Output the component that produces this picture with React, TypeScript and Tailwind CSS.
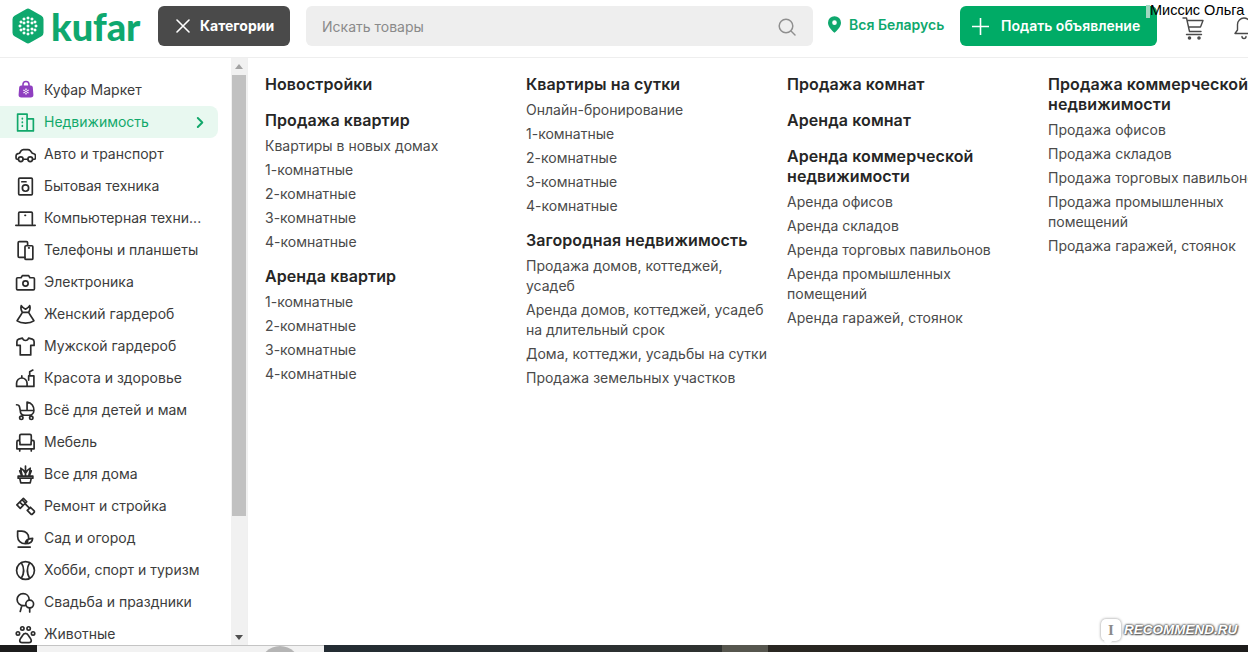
import type { ReactNode } from "react";

const S = ({ children, className = "text-[#2b2b2b]" }: { children: ReactNode; className?: string }) => (
  <svg viewBox="0 0 20 20" className={`h-[21px] w-[21px] shrink-0 ${className}`} fill="none" stroke="currentColor" strokeWidth={1.6} strokeLinecap="round" strokeLinejoin="round">
    {children}
  </svg>
);

const categories: { label: string; icon: ReactNode; active?: boolean }[] = [
  {
    label: "Куфар Маркет",
    icon: (
      <svg viewBox="0 0 20 20" className="h-5 w-5 shrink-0">
        <path d="M7 6V4.5a3 3 0 0 1 6 0V6" fill="none" stroke="#8f3fc0" strokeWidth={1.6} />
        <path d="M5.2 5.5h9.6a2 2 0 0 1 2 1.8l.6 7.5a2.6 2.6 0 0 1-2.6 2.7H5.2a2.6 2.6 0 0 1-2.6-2.7l.6-7.5a2 2 0 0 1 2-1.8z" fill="#8f3fc0" />
        <path d="M10 8.5v6M7.4 10l5.2 3M12.6 10l-5.2 3" stroke="#fff" strokeWidth={1.3} strokeDasharray="1.5 .7" />
      </svg>
    ),
  },
  {
    label: "Недвижимость",
    active: true,
    icon: (
      <S className="text-[#12a86b]">
        <path d="M2.5 2h9v16h-9zM11.5 6.5h6V18h-6M7 6v.5M7 9.5v.5M7 13v.5" />
      </S>
    ),
  },
  {
    label: "Авто и транспорт",
    icon: (
      <S>
        <path d="M3.2 14.500H2c-.6 0-1-.5-1-1.200v-2c0-1.100.7-1.800 1.800-2.100l1.500-.4 1.500-2.300c.6-.8 1.200-1.200 2.200-1.200h4.300c1 0 1.700.4 2.300 1.100l1.900 2.400 1.500.5c1 .3 1.500 1 1.500 2v2c0 .7-.4 1.200-1 1.200h-1M7.800 14.500h4.400" />
        <circle cx="5.5" cy="14.5" r="2.2" />
        <circle cx="14.5" cy="14.5" r="2.2" />
      </S>
    ),
  },
  {
    label: "Бытовая техника",
    icon: (
      <S>
        <rect x="3.5" y="2" width="13" height="16" rx="1" />
        <circle cx="10" cy="11.5" r="3" />
        <path d="M6.5 5.5h4" />
      </S>
    ),
  },
  {
    label: "Компьютерная техни...",
    icon: (
      <S>
        <path d="M3.5 15V5c0-.6.4-1 1-1h11c.6 0 1 .4 1 1v10M.8 16.5h18.4M9.5 7h.5" />
      </S>
    ),
  },
  {
    label: "Телефоны и планшеты",
    icon: (
      <S>
        <path d="M9.5 16.5H4c-.6 0-1-.4-1-1v-13c0-.6.4-1 1-1h7c.6 0 1 .4 1 1V5" />
        <rect x="9.5" y="5.5" width="7.5" height="13" rx="1" />
        <path d="M13 7.5h.5" />
      </S>
    ),
  },
  {
    label: "Электроника",
    icon: (
      <S>
        <path d="M2.500 5.500h3.300L7 3.500h6l1.200 2h3.300c.6 0 1 .4 1 1V16c0 .6-.4 1-1 1h-15c-.6 0-1-.4-1-1V6.500c0-.6.400-1 1-1z" />
        <circle cx="10" cy="11" r="2.5" />
      </S>
    ),
  },
  {
    label: "Женский гардероб",
    icon: (
      <S>
        <path d="M6 1.500c-.8 2-.5 3.800 1 6.500-1.500 3-3.500 5.500-5 8 2 1.500 4.500 2.200 8 2.200s6-.7 8-2.200c-1.500-2.500-3.500-5-5-8 1.500-2.700 1.800-4.500 1-6.500-.8 1.300-2.300 2.500-4 3.500-1.700-1-3.200-2.200-4-3.500zM7 8h6" />
      </S>
    ),
  },
  {
    label: "Мужской гардероб",
    icon: (
      <S>
        <path d="M7 2 3.500 3C2.300 3.400 1.800 4.300 1.800 5.500V9H5v9h10V9h3.200V5.500c0-1.200-.5-2.100-1.700-2.500L13 2c-.5 1.500-1.500 2.300-3 2.300S7.500 3.500 7 2z" />
      </S>
    ),
  },
  {
    label: "Красота и здоровье",
    icon: (
      <S>
        <path d="M1.500 17.500v-3a5 5 0 0 1 10 0v3zM6.500 9.500V7.500M11 17.500h7V7.500h-5v4M14 7.500V3.500l3-1.500" />
      </S>
    ),
  },
  {
    label: "Всё для детей и мам",
    icon: (
      <S>
        <path d="M1.500 4.500c1.700 0 2.500.7 2.800 2L5 10h13c.3-4-2.200-7.500-6.500-8v8M5 10c0 2.700 1.800 4.500 4.500 4.500h3.500c2.800 0 5-2 5-4.500M7 14.500l-.5 1M15 14.500l.5 1" />
        <circle cx="6" cy="17" r="1.6" />
        <circle cx="15.5" cy="17" r="1.6" />
      </S>
    ),
  },
  {
    label: "Мебель",
    icon: (
      <S>
        <path d="M4.500 8V3.500c0-.8.500-1.300 1.300-1.300h8.400c.8 0 1.300.5 1.300 1.300V8M1.800 9.500c0-.8.600-1.500 1.400-1.500s1.500.7 1.500 1.500V12h10.600V9.500c0-.8.700-1.500 1.500-1.500s1.400.7 1.400 1.500V16H1.800zM4.500 16v2M15.500 16v2" />
      </S>
    ),
  },
  {
    label: "Все для дома",
    icon: (
      <S>
        <path d="M3 11.500h14v2H3zM4.500 13.500l1 4.500h9l1-4.500M10 11.500V2M7 11.500c-.5-2-1.500-5-1.500-7.500 2 1 3.500 3 4.500 5 1-2 2.500-4 4.500-5 0 2.500-1 5.500-1.500 7.500M4.500 6.500l2 5M15.500 6.500l-2 5" />
      </S>
    ),
  },
  {
    label: "Ремонт и стройка",
    icon: (
      <S>
        <path d="M1.800 8.500 8 2.300l3.200 3.200L5 11.700zM4.500 5.800l3.200 3.200M6.700 3.600l3.200 3.200M9.500 7.300l4.500 4.500M13.200 12.200l1.500-1.500 3.500 3.500c.4.400.4 1 0 1.400l-1.600 1.600c-.4.400-1 .4-1.400 0l-3.500-3.500z" />
      </S>
    ),
  },
  {
    label: "Сад и огород",
    icon: (
      <S>
        <path d="M3 18.200h11.500M9.800 15C5.500 15 2.500 12 2.500 8.200V3h4c4 0 6.500 3 6.500 6.200 0 2.300-1.200 4.200-3.200 5.800zM9.800 15c0-2.800 2.500-5 7-5.200 0 3.200-2.500 5.200-7 5.200z" />
      </S>
    ),
  },
  {
    label: "Хобби, спорт и туризм",
    icon: (
      <S>
        <circle cx="10" cy="10" r="8.5" />
        <path d="M6 2.500c2.700 4.500 2.700 10.500 0 15M14 2.500c-2.700 4.500-2.700 10.500 0 15" />
      </S>
    ),
  },
  {
    label: "Свадьба и праздники",
    icon: (
      <S>
        <path d="M10 12.700c-.6.200-1.200.3-1.800.3C4.800 13 2 10.500 2 7.200 2 4 4.500 1.500 7.700 1.500c3.300 0 5.800 2.300 5.800 5.800M6.500 13l-1.500 5.500" />
        <circle cx="14" cy="11.5" r="3.7" />
        <path d="M14 15.200V19" />
      </S>
    ),
  },
  {
    label: "Животные",
    icon: (
      <S>
        <circle cx="2.8" cy="9" r="1.6" />
        <circle cx="7" cy="4.2" r="1.6" />
        <circle cx="13" cy="4.2" r="1.6" />
        <circle cx="17.2" cy="9" r="1.6" />
        <path d="M10 9c-1.600 0-2.500 1.300-3.200 2.600S4.500 14 4.500 15.700c0 1.200 1 2 2.200 2h6.600c1.200 0 2.200-.8 2.200-2 0-1.700-1.600-2.800-2.300-4.100S11.600 9 10 9z" />
      </S>
    ),
  },
];

type Section = { title: string; links?: string[] };

const columns: Section[][] = [
  [
    { title: "Новостройки" },
    { title: "Продажа квартир", links: ["Квартиры в новых домах", "1-комнатные", "2-комнатные", "3-комнатные", "4-комнатные"] },
    { title: "Аренда квартир", links: ["1-комнатные", "2-комнатные", "3-комнатные", "4-комнатные"] },
  ],
  [
    { title: "Квартиры на сутки", links: ["Онлайн-бронирование", "1-комнатные", "2-комнатные", "3-комнатные", "4-комнатные"] },
    {
      title: "Загородная недвижимость",
      links: [
        "Продажа домов, коттеджей, усадеб",
        "Аренда домов, коттеджей, усадеб на длительный срок",
        "Дома, коттеджи, усадьбы на сутки",
        "Продажа земельных участков",
      ],
    },
  ],
  [
    { title: "Продажа комнат" },
    { title: "Аренда комнат" },
    {
      title: "Аренда коммерческой недвижимости",
      links: ["Аренда офисов", "Аренда складов", "Аренда торговых павильонов", "Аренда промышленных помещений", "Аренда гаражей, стоянок"],
    },
  ],
  [
    {
      title: "Продажа коммерческой недвижимости",
      links: ["Продажа офисов", "Продажа складов", "Продажа торговых павильонов", "Продажа промышленных помещений", "Продажа гаражей, стоянок"],
    },
  ],
];

// white knit pattern inside the hexagon
const logoDots = [
  [16, 10], [16, 14], [16, 18], [16, 22], [16, 26],
  [12, 11], [20, 11], [12, 25], [20, 25],
  [12, 15], [20, 15], [12, 21], [20, 21],
  [8, 18], [24, 18], [9, 14], [23, 14], [9, 22], [23, 22],
];

function Header() {
  return (
    <header className="relative flex h-[58px] shrink-0 items-start border-b border-[#eeeeee] bg-white pl-3 pt-1.5">
      <div className="flex h-10 w-[146px] shrink-0 items-center gap-[7px]">
        <svg viewBox="0 0 32 36" className="h-[36px] w-[32px] shrink-0">
          <path d="M14 1.2a4 4 0 0 1 4 0l11.5 6.600a4 4 0 0 1 2 3.500v13.400a4 4 0 0 1-2 3.500L18 34.800a4 4 0 0 1-4 0L2.500 28.200a4 4 0 0 1-2-3.500V11.300a4 4 0 0 1 2-3.500z" fill="#0fa86e" />
          {logoDots.map(([x, y]) => (
            <rect key={`${x}-${y}`} x={x - 1.3} y={y - 1.3} width={2.6} height={2.6} fill="#fff" transform={`rotate(45 ${x} ${y})`} />
          ))}
        </svg>
        <span className="font-['Lato',sans-serif] text-[38px] font-black leading-none tracking-[-0.1px] text-[#0fa86e]">kufar</span>
      </div>
      <button className="flex h-10 w-[132px] shrink-0 items-center rounded-md bg-[#4a4a4a] pl-[18px] text-sm font-bold text-white">
        <svg viewBox="0 0 14 14" className="mr-[10px] h-[14px] w-[14px]" stroke="currentColor" strokeWidth={1.6} strokeLinecap="round">
          <path d="M1 1l12 12M13 1 1 13" />
        </svg>
        Категории
      </button>
      <div className="ml-4 flex h-10 w-[507px] shrink-0 items-center justify-between rounded-md bg-[#eeeeee] pl-4 pr-4 pt-px text-sm text-[#8a8a8a]">
        Искать товары
        <svg viewBox="0 0 20 20" className="h-5 w-5" fill="none" stroke="#8f8f8f" strokeWidth={1.5} strokeLinecap="round">
          <circle cx="9" cy="9" r="6.8" />
          <path d="m14 14 4 4" />
        </svg>
      </div>
      <div className="ml-[15px] flex h-10 w-[132px] shrink-0 items-center gap-2 pb-[3px] text-sm font-semibold text-[#0fa86e]">
        <svg viewBox="0 0 14 18" className="h-[17px] w-[13px] shrink-0">
          <path fillRule="evenodd" d="M7 0a7 7 0 0 1 7 7c0 4.500-4.500 8.500-7 11C4.500 15.500 0 11.500 0 7a7 7 0 0 1 7-7zm0 4.500a2.500 2.500 0 1 0 0 5 2.500 2.500 0 0 0 0-5z" fill="#0fa86e" />
        </svg>
        Вся Беларусь
      </div>
      <button className="flex h-10 w-[197px] shrink-0 items-center rounded-md bg-[#00ab66] pl-3 text-sm font-semibold text-white">
        <svg viewBox="0 0 14 14" className="mr-3 h-[17px] w-[17px]" stroke="currentColor" strokeWidth={1.3} strokeLinecap="round">
          <path d="M7 0v14M0 7h14" />
        </svg>
        Подать объявление
      </button>
      <svg viewBox="0 0 22 24" className="ml-[25px] mt-[10px] h-[24px] w-[22px] shrink-0" fill="none" stroke="#4a4a4a" strokeWidth={1.4} strokeLinecap="round" strokeLinejoin="round">
        <path d="M1 2h3.500l3 13.500H19M5 4.500h16l-2.500 6.500H6.500M4.500 18.500h15" />
        <circle cx="7.5" cy="22" r="1.1" fill="#4a4a4a" />
        <circle cx="17" cy="22" r="1.1" fill="#4a4a4a" />
      </svg>
      <svg viewBox="0 0 22 24" className="ml-[29px] mt-[10px] h-[24px] w-[22px] shrink-0" fill="none" stroke="#4a4a4a" strokeWidth={1.4} strokeLinecap="round" strokeLinejoin="round">
        <path d="M11 2a6.500 6.500 0 0 0-6.500 6.500V14L2 17.500h18L17.500 14V8.500A6.500 6.500 0 0 0 11 2zM9 20.500a2 2 0 0 0 4 0" />
      </svg>
      <div className="absolute left-[1146px] top-[2px] flex items-start whitespace-nowrap font-['Liberation_Sans',sans-serif] text-[14.5px] leading-[16px] text-black">
        <span className="mt-[3px] h-[13px] w-[4px] bg-[#a0d8c0]" />
        <span>Миссис Ольга</span>
      </div>
    </header>
  );
}

function Sidebar() {
  return (
    <aside className="flex h-full w-[248px] shrink-0 border-r border-[#f0f0f0]">
      <ul className="h-full w-[231px] shrink-0 overflow-hidden pr-[13px] pt-4">
        {categories.map((c) => (
          <li
            key={c.label}
            className={`flex h-8 items-center rounded-r-lg pl-[15px] text-sm ${c.active ? "bg-[#e8f8f0] text-[#12a86b]" : "text-[#3c3c3c]"}`}
          >
            <span className="mr-2 flex w-[21px] justify-center">{c.icon}</span>
            <span className="flex-1 whitespace-nowrap">{c.label}</span>
            {c.active && (
              <svg viewBox="0 0 10 14" className="mr-[13px] h-[13px] w-[9px]" fill="none" stroke="#12a86b" strokeWidth={2.2} strokeLinecap="round" strokeLinejoin="round">
                <path d="m2 2 5 5-5 5" />
              </svg>
            )}
          </li>
        ))}
      </ul>
      <div className="flex h-full w-4 shrink-0 flex-col items-center bg-[#f1f1f1] pb-[5px] pt-[6px]">
        <span className="h-0 w-0 border-x-4 border-b-[5px] border-x-transparent border-b-[#a3a3a3]" />
        <span className="mt-[6px] h-[441px] w-[14px] bg-[#c1c1c1]" />
        <span className="mt-auto h-0 w-0 border-x-4 border-t-[5px] border-x-transparent border-t-[#505050]" />
      </div>
    </aside>
  );
}

function Menu() {
  return (
    <div className="grid min-w-0 flex-1 grid-cols-[repeat(4,245px)] gap-x-4 overflow-hidden pl-[17px] pt-4">
      {columns.map((col, i) => (
        <div key={i} className="flex flex-col gap-4">
          {col.map((s) => (
            <section key={s.title}>
              <h3 className="text-base font-semibold leading-5 tracking-[0.09px] text-[#262626]">{s.title}</h3>
              {s.links && (
                <ul className="-mb-1 mt-1">
                  {s.links.map((l) => (
                    <li key={l} className="py-0.5 text-sm leading-5 text-[#4a4a4a]">
                      {l}
                    </li>
                  ))}
                </ul>
              )}
            </section>
          ))}
        </div>
      ))}
    </div>
  );
}

export default function App() {
  return (
    <div className="relative flex h-[652px] w-[1248px] flex-col overflow-hidden bg-white font-['Inter',sans-serif]">
      <Header />
      <main className="flex min-h-0 flex-1">
        <Sidebar />
        <Menu />
      </main>
      <div className="flex h-[7px] shrink-0 overflow-hidden">
        <div className="w-[37px] bg-[#1c1c1c]" />
        <div className="flex w-[287px] justify-end border-t border-[#c4c4c4] bg-[#f2f2f2] pr-6">
          <span className="h-10 w-10 rounded-full bg-[#b5b5b5]" />
        </div>
        <div className="w-[398px] bg-gradient-to-r from-[#232c33] to-[#2f3230]" />
        <div className="w-[46px] bg-[#56564e]" />
        <div className="flex-1 bg-gradient-to-r from-[#2a2722] to-[#1d1c1b]" />
      </div>
      <div className="absolute left-[1101px] top-[619px] flex items-center gap-[3px]">
        <span className="relative flex h-[22px] w-[20px] items-center justify-center rounded-[5px] bg-white font-['Liberation_Serif',serif] text-[15px] font-bold leading-none text-[#8a8a8a] shadow-[0_0_3px_#8a8a8a]">
          I
          <span className="absolute -bottom-[3px] left-1 h-[6px] w-[6px] rotate-45 bg-white" />
        </span>
        <span className="font-['Liberation_Sans',sans-serif] text-[13.5px] font-bold italic leading-none text-white [text-shadow:0_0_2px_#555,0_0_2px_#555,0_0_3px_#777,1px_1px_1px_#777]">
          RECOMMEND.RU
        </span>
      </div>
    </div>
  );
}
